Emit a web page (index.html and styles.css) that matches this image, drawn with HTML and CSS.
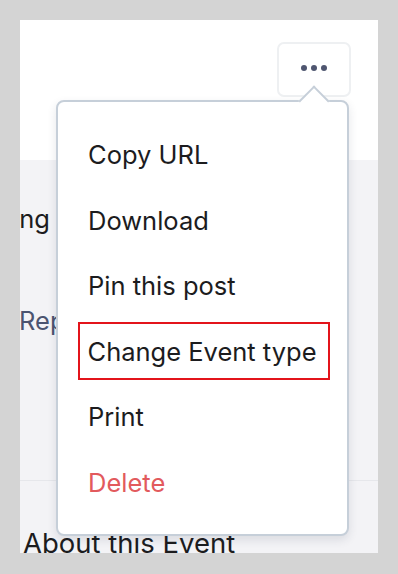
FILE: index.html
```html
<!DOCTYPE html>
<html>
<head>
<meta charset="utf-8">
<link rel="stylesheet" href="styles.css">
</head>
<body>
<div class="panel">
  <header class="head">
    <button class="more" aria-label="More">
      <span class="dot"></span><span class="dot"></span><span class="dot"></span>
    </button>
  </header>
  <section class="body">
    <div class="row row-ng"><span class="clip">Upcoming</span></div>
    <div class="row row-rep"><span class="link">Report</span></div>
    <div class="divider"></div>
    <h2 class="about">About this Event</h2>
  </section>

  <div class="menu">
    <span class="arrow"></span>
    <ul class="items">
      <li class="item"><span class="label">Copy URL</span></li>
      <li class="item"><span class="label">Download</span></li>
      <li class="item"><span class="label">Pin this post</span></li>
      <li class="item"><span class="label hl">Change Event type</span></li>
      <li class="item"><span class="label">Print</span></li>
      <li class="item"><span class="label danger">Delete</span></li>
    </ul>
  </div>
</div>
</body>
</html>
```
FILE: styles.css
```css
* { box-sizing: border-box; }
html, body { margin: 0; }
body {
  background: #d4d4d4;
  padding: 20px;
  font-family: Inter, "Noto Sans", sans-serif;
  color: #1c1c1e;
}
.panel {
  width: 358px;
  height: 533px;
  background: #f3f3f6;
  position: relative;
  overflow: hidden;
}
.head {
  height: 140px;
  background: #fff;
  display: flex;
  justify-content: flex-end;
  align-items: flex-start;
  padding: 22px 27px 0 0;
}
.more {
  width: 74px;
  height: 55px;
  border: 2px solid #eef0f2;
  border-radius: 7px;
  background: #fff;
  display: flex;
  align-items: center;
  justify-content: center;
  gap: 4px;
  padding: 0 0 4px 0;
}
.dot {
  width: 6px;
  height: 6px;
  border-radius: 50%;
  background: #4f5670;
}
.row {
  display: flex;
  justify-content: flex-end;
  width: 30px;
  white-space: nowrap;
  font-size: 25.5px;
}
.row-ng { margin-top: 44px; height: 30px; line-height: 30px; }
.row-rep {
  margin-top: 72px;
  height: 30px;
  line-height: 30px;
  width: auto;
  justify-content: flex-start;
  margin-left: -1px;
}
.link { color: #4b5470; }
.divider {
  height: 1px;
  background: #e6e7eb;
  margin-top: 144px;
}
.about {
  margin: 47px 0 0 3px;
  font-size: 27.5px;
  font-weight: 400;
  line-height: 30px;
  white-space: nowrap;
}
.menu {
  position: absolute;
  left: 36px;
  top: 80px;
  width: 293px;
  height: 436px;
  background: #fff;
  border: 2px solid #c6cfd9;
  border-radius: 8px;
  box-shadow: 0 4px 10px rgba(40, 50, 70, 0.12);
}
.arrow {
  position: absolute;
  top: -12px;
  left: 245px;
  width: 22px;
  height: 22px;
  background: #fff;
  border-left: 2px solid #c6cfd9;
  border-top: 2px solid #c6cfd9;
  transform: rotate(45deg);
}
.items {
  list-style: none;
  margin: 0;
  padding: 20px 0 0 20px;
  position: relative;
}
.item {
  height: 65.5px;
  display: flex;
  align-items: center;
}
.label {
  width: 252px;
  height: 58px;
  display: flex;
  align-items: center;
  padding: 0 8px;
  border: 2px solid transparent;
  font-size: 25.5px;
  color: #1c1c1e;
  white-space: nowrap;
}
.label.hl { border: 2.5px solid #e3141b; padding-left: 7.5px; }
.label.danger { color: #e25a5d; }
```
